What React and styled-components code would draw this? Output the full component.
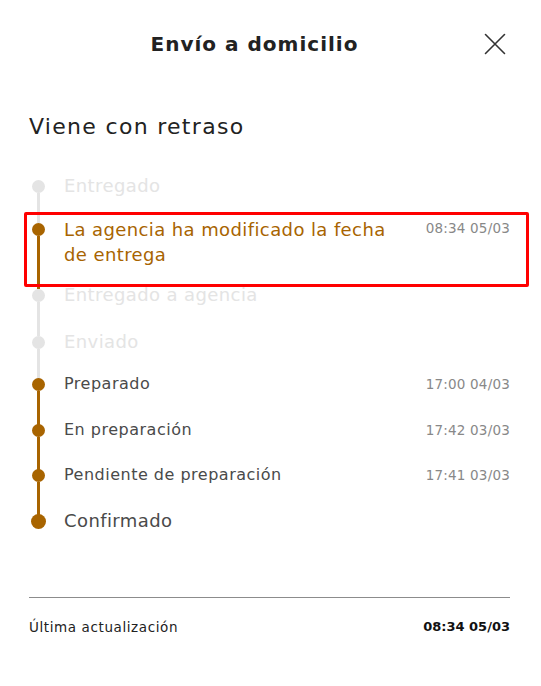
import React from 'react';
import styled, { createGlobalStyle } from 'styled-components';

const Brown = '#a86400';
const Faded = '#e4e4e4';

const GlobalStyle = createGlobalStyle`
  html, body {
    margin: 0;
    padding: 0;
    background: #ffffff;
  }
  body {
    font-family: "DejaVu Sans", "Noto Sans", sans-serif;
    color: #222222;
  }
`;

const Panel = styled.div`
  width: 541px;
  min-height: 686px;
  box-sizing: border-box;
  padding: 30px 31px 0 29px;
  background: #ffffff;
`;

const Header = styled.header`
  position: relative;
  display: flex;
  justify-content: center;
  align-items: center;
  height: 28px;
`;

const Title = styled.h1`
  margin: 0 30px 0 0;
  font-size: 20px;
  line-height: 28px;
  font-weight: 700;
  letter-spacing: 1px;
  color: #222222;
`;

const CloseButton = styled.button`
  position: absolute;
  right: 4px;
  top: 3px;
  width: 22px;
  height: 22px;
  padding: 0;
  border: none;
  background: transparent;
  display: flex;
  align-items: center;
  justify-content: center;
  cursor: pointer;
`;

const Subtitle = styled.h2`
  margin: 55px 0 0 0;
  font-size: 22px;
  line-height: 28px;
  font-weight: 500;
  letter-spacing: 1.3px;
  color: #222222;
`;

const Timeline = styled.ol`
  list-style: none;
  margin: 33px 0 0 2px;
  padding: 0;
`;

const Step = styled.li`
  position: relative;
  display: flex;
  align-items: stretch;

  ${({ $highlighted }) =>
    $highlighted &&
    `
    &::before {
      content: '';
      position: absolute;
      top: -5px;
      bottom: -4px;
      left: -7px;
      right: -19px;
      border: 3px solid #ff0000;
      border-radius: 2px;
      z-index: 1;
      pointer-events: none;
    }
  `}
`;

const Marker = styled.div`
  width: 15px;
  flex: 0 0 15px;
  display: flex;
  flex-direction: column;
  align-items: center;
`;

const Dot = styled.span`
  display: block;
  flex: 0 0 auto;
  width: ${({ $size }) => $size}px;
  height: ${({ $size }) => $size}px;
  margin-top: ${({ $offset }) => $offset}px;
  border-radius: 50%;
  background: ${({ $color }) => $color};
  position: relative;
  z-index: 0;
`;

const Connector = styled.span`
  display: block;
  flex: 1;
  width: 3px;
  margin-bottom: -6px;
  background: ${({ $color }) => $color};
`;

const Body = styled.div`
  flex: 1;
  display: flex;
  justify-content: space-between;
  align-items: flex-start;
  gap: 16px;
  margin-left: 18px;
  padding-bottom: ${({ $space }) => $space}px;
`;

const Label = styled.span`
  font-size: ${({ $big }) => ($big ? 18 : 16)}px;
  line-height: ${({ $lh }) => $lh}px;
  font-weight: 500;
  letter-spacing: ${({ $big }) => ($big ? 0.4 : 0.5)}px;
  color: ${({ $tone }) => $tone};
  max-width: ${({ $wrap }) => ($wrap ? '345px' : 'none')};
`;

const Time = styled.span`
  flex: 0 0 auto;
  font-size: 13.5px;
  line-height: 22px;
  letter-spacing: 0.2px;
  color: #888888;
  white-space: nowrap;
`;

const Divider = styled.hr`
  margin: 64px 0 0 0;
  border: none;
  border-top: 1px solid #8c8c8c;
`;

const Footer = styled.div`
  display: flex;
  justify-content: space-between;
  align-items: center;
  margin-top: 19px;
  font-size: 13.5px;
  line-height: 20px;
`;

const FooterLabel = styled.span`
  color: #222222;
  letter-spacing: 0.6px;
`;

const FooterTime = styled.span`
  font-weight: 700;
  font-size: 13px;
  color: #111111;
`;

const steps = [
  { label: 'Entregado', state: 'faded', big: true, lh: 24, space: 19 },
  {
    label: 'La agencia ha modificado la fecha de entrega',
    state: 'current',
    big: true,
    lh: 25,
    space: 16,
    time: '08:34 05/03',
    wrap: true,
  },
  { label: 'Entregado a agencia', state: 'faded', big: true, lh: 24, space: 23 },
  { label: 'Enviado', state: 'faded', big: true, lh: 24, space: 19 },
  { label: 'Preparado', state: 'done', lh: 22, space: 24, time: '17:00 04/03' },
  { label: 'En preparación', state: 'done', lh: 22, space: 23, time: '17:42 03/03' },
  { label: 'Pendiente de preparación', state: 'done', lh: 22, space: 23, time: '17:41 03/03' },
  { label: 'Confirmado', state: 'done', big: true, lh: 24, space: 0, dot: 15 },
];

const toneFor = (state) => {
  if (state === 'faded') return Faded;
  if (state === 'current') return Brown;
  return '#4a4a4a';
};

function CloseIcon() {
  return (
    <svg width="22" height="22" viewBox="0 0 22 22" fill="none">
      <path d="M1.5 1.5 L20.5 20.5 M20.5 1.5 L1.5 20.5" stroke="#333" strokeWidth="1.6" strokeLinecap="round" />
    </svg>
  );
}

export default function App() {
  return (
    <>
      <GlobalStyle />
      <Panel>
        <Header>
          <Title>Envío a domicilio</Title>
          <CloseButton aria-label="Cerrar">
            <CloseIcon />
          </CloseButton>
        </Header>

        <Subtitle>Viene con retraso</Subtitle>

        <Timeline>
          {steps.map((step, i) => {
            const dotColor = step.state === 'faded' ? Faded : Brown;
            const size = step.dot || 13;
            const last = i === steps.length - 1;
            return (
              <Step key={step.label} $highlighted={step.state === 'current'}>
                <Marker>
                  <Dot $size={size} $color={dotColor} $offset={(Math.min(step.lh, 24) - size) / 2} />
                  {!last && <Connector $color={dotColor} />}
                </Marker>
                <Body $space={step.space}>
                  <Label $big={step.big} $lh={step.lh} $tone={toneFor(step.state)} $wrap={step.wrap}>
                    {step.label}
                  </Label>
                  {step.time && <Time>{step.time}</Time>}
                </Body>
              </Step>
            );
          })}
        </Timeline>

        <Divider />
        <Footer>
          <FooterLabel>Última actualización</FooterLabel>
          <FooterTime>08:34 05/03</FooterTime>
        </Footer>
      </Panel>
    </>
  );
}
